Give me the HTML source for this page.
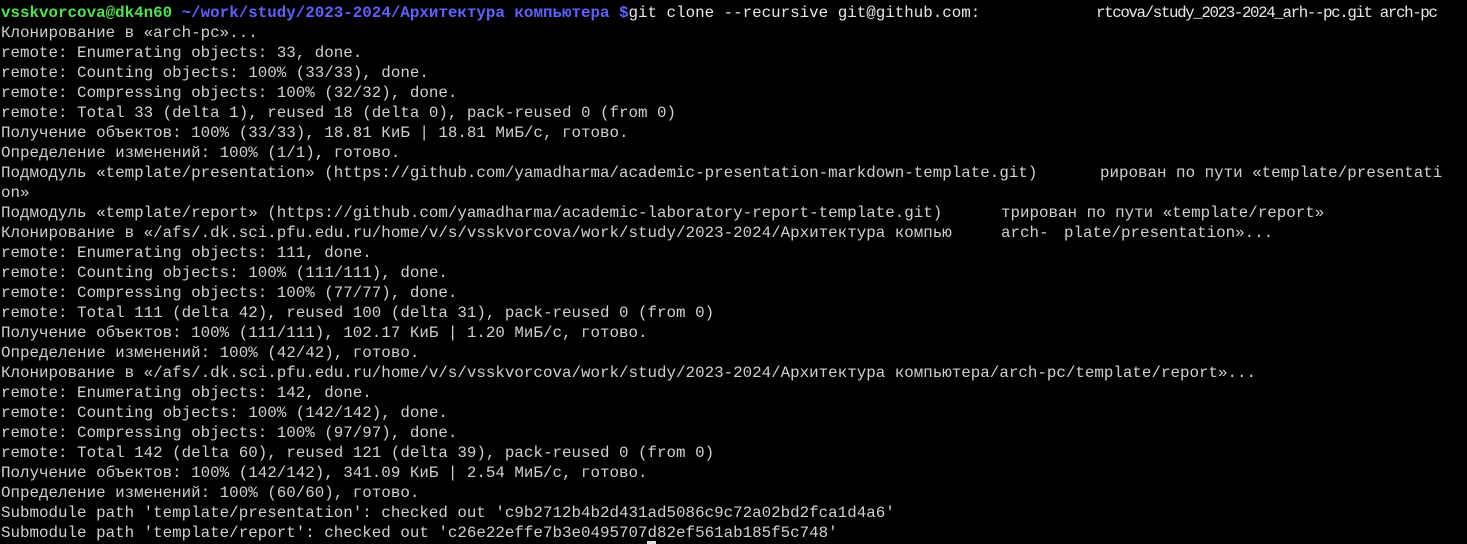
<!DOCTYPE html>
<html><head><meta charset="utf-8"><style>
html,body{margin:0;padding:0;background:#000;width:1467px;height:544px;overflow:hidden}
#t{position:absolute;left:1px;top:3px;font-family:"Liberation Mono","DejaVu Sans Mono",monospace;font-size:15.85px;line-height:20px;color:#d0d0d0}
.l{position:relative;height:20px;white-space:pre}
.g{color:#4ee34e;font-weight:bold}
.b{color:#6060ff;font-weight:bold}
.w{color:#e8e8e8}
.a{position:absolute;top:0}
#cur{position:absolute;left:647px;top:541px;width:9px;height:3px;background:#ddd}
</style></head><body>
<div id="t">
<div class="l"><span class="g">vsskvorcova@dk4n60</span> <span class="b">~/work/study/2023-2024/Архитектура компьютера $</span><span class="w">git clone --recursive git@github.com:</span><span class="a w" style="left:1095px;letter-spacing:-1.4px">rtcova/study_2023-2024_arh--pc.git arch-pc</span></div>
<div class="l">Клонирование в «arch-pc»...</div>
<div class="l">remote: Enumerating objects: 33, done.</div>
<div class="l">remote: Counting objects: 100% (33/33), done.</div>
<div class="l">remote: Compressing objects: 100% (32/32), done.</div>
<div class="l">remote: Total 33 (delta 1), reused 18 (delta 0), pack-reused 0 (from 0)</div>
<div class="l">Получение объектов: 100% (33/33), 18.81 КиБ | 18.81 МиБ/с, готово.</div>
<div class="l">Определение изменений: 100% (1/1), готово.</div>
<div class="l">Подмодуль «template/presentation» (https://github.com/yamadharma/academic-presentation-markdown-template.git)<span class="a" style="left:1099px">рирован по пути «template/presentati</span></div>
<div class="l">on»</div>
<div class="l">Подмодуль «template/report» (https://github.com/yamadharma/academic-laboratory-report-template.git)<span class="a" style="left:1000px">трирован по пути «template/report»</span></div>
<div class="l">Клонирование в «/afs/.dk.sci.pfu.edu.ru/home/v/s/vsskvorcova/work/study/2023-2024/Архитектура компью<span class="a" style="left:1000px">arch-</span><span class="a" style="left:1063px">plate/presentation»...</span></div>
<div class="l">remote: Enumerating objects: 111, done.</div>
<div class="l">remote: Counting objects: 100% (111/111), done.</div>
<div class="l">remote: Compressing objects: 100% (77/77), done.</div>
<div class="l">remote: Total 111 (delta 42), reused 100 (delta 31), pack-reused 0 (from 0)</div>
<div class="l">Получение объектов: 100% (111/111), 102.17 КиБ | 1.20 МиБ/с, готово.</div>
<div class="l">Определение изменений: 100% (42/42), готово.</div>
<div class="l">Клонирование в «/afs/.dk.sci.pfu.edu.ru/home/v/s/vsskvorcova/work/study/2023-2024/Архитектура компьютера/arch-pc/template/report»...</div>
<div class="l">remote: Enumerating objects: 142, done.</div>
<div class="l">remote: Counting objects: 100% (142/142), done.</div>
<div class="l">remote: Compressing objects: 100% (97/97), done.</div>
<div class="l">remote: Total 142 (delta 60), reused 121 (delta 39), pack-reused 0 (from 0)</div>
<div class="l">Получение объектов: 100% (142/142), 341.09 КиБ | 2.54 МиБ/с, готово.</div>
<div class="l">Определение изменений: 100% (60/60), готово.</div>
<div class="l">Submodule path 'template/presentation': checked out 'c9b2712b4b2d431ad5086c9c72a02bd2fca1d4a6'</div>
<div class="l">Submodule path 'template/report': checked out 'c26e22effe7b3e0495707d82ef561ab185f5c748'</div>
</div>
<div id="cur"></div>
</body></html>
